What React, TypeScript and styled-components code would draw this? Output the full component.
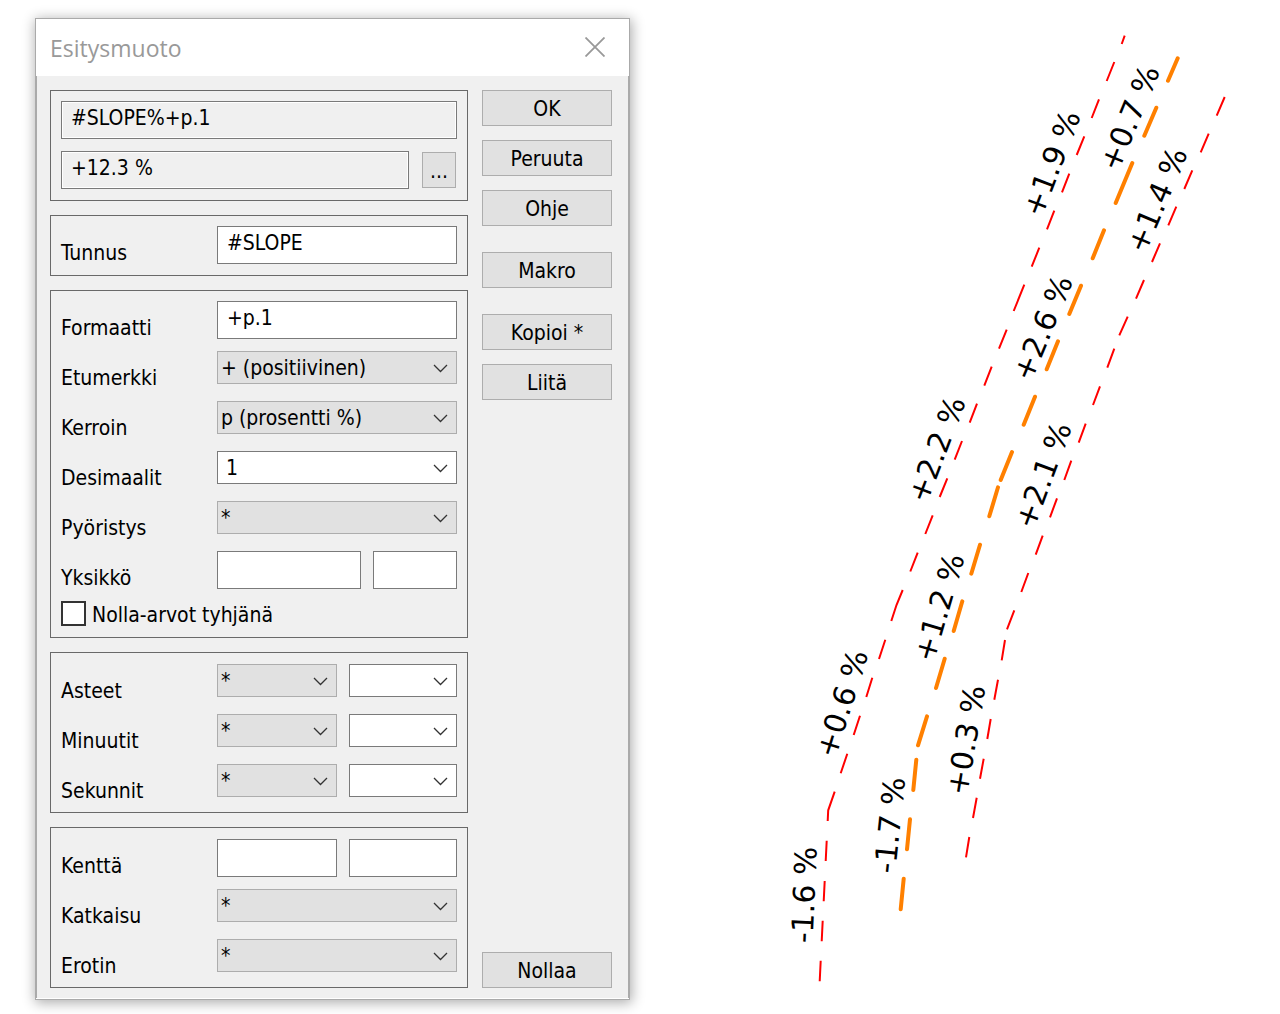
import React, { useId } from "react";
import styled, { createGlobalStyle } from "styled-components";

const GlobalStyle = createGlobalStyle`
  *, *::before, *::after { box-sizing: border-box; }
  body {
    margin: 0;
    background: #fff;
    color: #000;
    font-family: "DejaVu Sans Condensed", "DejaVu Sans", sans-serif;
    font-stretch: condensed;
    font-size: 21px;
  }
  button, input, select { font: inherit; color: inherit; margin: 0; border-radius: 0; }
`;

const Page = styled.main`
  display: flex;
  align-items: flex-start;
`;

const Dialog = styled.section`
  flex: 0 0 595px;
  margin: 18px 0 14px 35px;
  border: 1px solid #aaa;
  background: #fff;
  box-shadow: 1px 2px 12px 1px rgba(0, 0, 0, 0.32);
`;

const TitleBar = styled.header`
  display: flex;
  align-items: center;
  justify-content: space-between;
  height: 57px;
  padding: 0 24px 2px 14px;
`;

const Title = styled.h1`
  margin: 0;
  padding-top: 3px;
  font-family: "Open Sans", "Noto Sans", sans-serif;
  font-stretch: normal;
  font-size: 23px;
  line-height: 30px;
  font-weight: 400;
  color: #999;
`;

const CloseButton = styled.button`
  display: flex;
  padding: 0;
  border: 0;
  background: none;
`;

const Body = styled.form`
  display: grid;
  grid-template-columns: minmax(0, 1fr) 130px;
  column-gap: 14px;
  margin-bottom: 1px;
  padding: 14px 16px 10px 13px;
  border: solid #aaa;
  border-width: 0 1px;
  background: #f0f0f0;
`;

const Groups = styled.div`
  display: flex;
  flex-direction: column;
  gap: 14px;
`;

const Group = styled.div<{ $low?: boolean }>`
  display: grid;
  row-gap: 12px;
  padding: ${(p) => (p.$low ? "11px 10px 10px" : "10px 10px 11px")};
  border: 1px solid #696969;
`;

const Row = styled.div<{ $columns: string; $gap?: number }>`
  display: grid;
  grid-template-columns: ${(p) => p.$columns};
  column-gap: ${(p) => p.$gap ?? 0}px;
  align-items: start;
  height: 38px;
`;

const Label = styled.label`
  padding-top: 15px;
  line-height: 24px;
`;

const TextField = styled.input`
  width: 100%;
  min-width: 0;
  height: 38px;
  padding: 0 8px 4px 9px;
  border: 1px solid #7a7a7a;
  background: #fff;
  outline: none;

  &:read-only {
    background: #f0f0f0;
    box-shadow: inset 0 0 0 1px #fff;
  }
`;

const SelectFrame = styled.div`
  position: relative;
  display: grid;

  svg {
    position: absolute;
    right: 9px;
    top: 13px;
    pointer-events: none;
  }
`;

const SelectBox = styled.select<{ $editable?: boolean }>`
  appearance: none;
  width: 100%;
  height: 33px;
  padding: 0 28px 0 ${(p) => (p.$editable ? 8 : 3)}px;
  border: 1px solid ${(p) => (p.$editable ? "#7a7a7a" : "#adadad")};
  background: ${(p) => (p.$editable ? "#fff" : "#e1e1e1")};
  outline: none;
`;

const CheckRow = styled.div`
  display: flex;
  align-items: center;
  gap: 6px;
  height: 25px;
`;

const CheckBox = styled.input`
  appearance: none;
  width: 25px;
  height: 25px;
  border: 2px solid #333;
  background: #fff;
`;

const CheckLabel = styled.label`
  line-height: 24px;
  padding-top: 2px;
`;

const Buttons = styled.div`
  display: flex;
  flex-direction: column;
  gap: 14px;
`;

const ButtonSet = styled.div<{ $last?: boolean }>`
  display: grid;
  gap: 14px;
  margin-bottom: 12px;
  ${(p) => p.$last && "margin: auto 0 0;"}
`;

const Button = styled.button`
  width: 100%;
  height: 36px;
  padding: 2px 0 0;
  border: 1px solid #adadad;
  background: #e1e1e1;
`;

const MoreButton = styled(Button)`
  width: 34px;
  margin-top: 1px;
`;

const Drawing = styled.svg`
  display: block;
  flex: 1 1 0;
  min-width: 0;
  font-family: "DejaVu Sans", sans-serif;
  font-stretch: normal;
  font-size: 30px;
`;

const VALUE_COLUMNS = "156px minmax(0, 1fr)";

function Field({ label, value = "" }: { label: string; value?: string }) {
  const id = useId();
  return (
    <Row $columns={VALUE_COLUMNS}>
      <Label htmlFor={id}>{label}</Label>
      <TextField id={id} defaultValue={value} />
    </Row>
  );
}

function Select({ value = "", ...rest }: { value?: string; editable?: boolean; id?: string; "aria-label"?: string }) {
  const { editable, ...attrs } = rest;
  return (
    <SelectFrame>
      <SelectBox $editable={editable} defaultValue={value} {...attrs}>
        <option value={value}>{value}</option>
      </SelectBox>
      <svg width="15" height="9" viewBox="0 0 15 9" fill="none" stroke="#333" strokeWidth="1.3" aria-hidden="true">
        <path d="M1 1 L7.5 7.5 L14 1" />
      </svg>
    </SelectFrame>
  );
}

function SelectRow({ label, value, editable }: { label: string; value: string; editable?: boolean }) {
  const id = useId();
  return (
    <Row $columns={VALUE_COLUMNS}>
      <Label htmlFor={id}>{label}</Label>
      <Select id={id} value={value} editable={editable} />
    </Row>
  );
}

const PairGrid = styled.div<{ $columns: string }>`
  display: grid;
  grid-template-columns: ${(p) => p.$columns};
  column-gap: 12px;
`;

function FieldPair({ label, columns }: { label: string; columns: string }) {
  const id = useId();
  return (
    <Row $columns={VALUE_COLUMNS}>
      <Label htmlFor={id}>{label}</Label>
      <PairGrid $columns={columns}>
        <TextField id={id} />
        <TextField aria-label={label + " 2"} />
      </PairGrid>
    </Row>
  );
}

function SelectPair({ label }: { label: string }) {
  const id = useId();
  return (
    <Row $columns={VALUE_COLUMNS}>
      <Label htmlFor={id}>{label}</Label>
      <PairGrid $columns="10fr 9fr">
        <Select id={id} value="*" />
        <Select aria-label={label + " 2"} editable />
      </PairGrid>
    </Row>
  );
}

const EDGE_LINES = [
  "M1124.7 35.7L1121.7 44M1114.3 62L1106.7 81M1099 99.3L1091.7 118M1084.3 136.3L1076.7 155",
  "M1069.3 173.7L1062 192.3M1054.3 210.7L1047 229.3M1039.3 247.7L1031.7 266.7M1024.3 284.7L1013.7 311",
  "M1006.7 329.7L999 348.7M991.7 366.7L984.3 385.7M977 403.7L969.7 422.7M962 441L954.7 459.7",
  "M947.3 478.3L939.7 497M932.7 515.3L925.3 534M917.7 552.7L910.3 571.5M902.7 590L896.5 605L891.3 621",
  "M885.3 639.7L879 659M872.3 677.7L866.3 697M860 715.7L853.7 735M847.3 753.7L840.7 773.3",
  "M834.7 791.7L828.2 810.3L827.7 821M826.7 840.7L825.7 861M824.7 881L823.7 901.3M822.7 920.7L821.7 941.3M820.7 960.7L819.7 981.3",
  "M1224.7 97L1216.7 115.7M1208.7 133.7L1200.7 152.3M1192.3 170.3L1184.3 189M1176.3 206.7L1168.3 225.3",
  "M1160 243.3L1152 262M1144 280L1136 298.7M1127.7 316.7L1119.3 335.3M1114.3 348.7L1107.3 367.7",
  "M1100 386.3L1093 405M1085.7 423.7L1078.7 442.7M1071.3 460.7L1064.3 480M1057 498.3L1050 517.3",
  "M1042.7 535.7L1035.7 554.7M1028.3 573L1021.3 592M1014.3 610.3L1007 629.3M1005 640L1001.7 660.3",
  "M998 679.7L994.3 699.7M990.7 719L987.3 739M983.7 758.7L980 778.7M976.7 797.7L973 818M969.3 837L966 857.3",
].join("");

const CENTRE_LINE = [
  "M1177.7 58.3L1168 80.7M1156.3 107.7L1144.3 135.7M1132.3 163L1115.7 203M1104 230.3L1092.7 258.3",
  "M1081 285.7L1069.3 314M1058 341.3L1046.7 369.3M1035 396.7L1023.7 424.7M1012 452L1000.7 480",
  "M998 487.3L989.3 516.3M980 544.7L971.3 573.7M962.3 601.3L953.7 631M944.7 658.7L936 688",
  "M927 716.3L918 745.3M916.3 759.7L913.3 790M910 819.3L907 849.3M903.7 878.7L900.7 909.3",
].join("");

// Each slope label turns about the middle of its sign.
const SLOPES = [
  { text: "+1.9 %", x: 1036, y: 205, angle: 69 },
  { text: "+0.7 %", x: 1113, y: 159, angle: 67.5 },
  { text: "+1.4 %", x: 1140, y: 241, angle: 67 },
  { text: "+2.6 %", x: 1026, y: 369, angle: 67.5 },
  { text: "+2.2 %", x: 921, y: 491, angle: 69 },
  { text: "+2.1 %", x: 1028, y: 517, angle: 69.5 },
  { text: "+1.2 %", x: 927, y: 650, angle: 73.5 },
  { text: "+0.6 %", x: 829, y: 746, angle: 72.5 },
  { text: "+0.3 %", x: 959, y: 784, angle: 80.5 },
  { text: "-1.7 %", x: 884.3, y: 871, angle: 84 },
  { text: "-1.6 %", x: 801.7, y: 941, angle: 87.5 },
];

function RoadDrawing() {
  return (
    <Drawing viewBox="630 0 650 1014">
      <path d={EDGE_LINES} fill="none" stroke="#f00" strokeWidth="2" />
      <path d={CENTRE_LINE} fill="none" stroke="#ff8000" strokeWidth="4" strokeLinecap="round" />
      {SLOPES.map((s) => (
        <text
          key={s.text}
          x={s.text[0] === "+" ? -11 : -2}
          y={s.text[0] === "+" ? 10 : 11}
          transform={`translate(${s.x} ${s.y}) rotate(${-s.angle})`}
        >
          {s.text}
        </text>
      ))}
    </Drawing>
  );
}

export default function App() {
  return (
    <>
      <GlobalStyle />
      <Page>
        <Dialog role="dialog" aria-labelledby="dialog-title">
          <TitleBar>
            <Title id="dialog-title">Esitysmuoto</Title>
            <CloseButton type="button" aria-label="Sulje">
              <svg width="20" height="20" viewBox="0 0 20 20" stroke="#999" strokeWidth="1.8">
                <path d="M0.5 0.5L19.5 19.5M19.5 0.5L0.5 19.5" />
              </svg>
            </CloseButton>
          </TitleBar>
          <Body onSubmit={(e) => e.preventDefault()}>
            <Groups>
              <Group>
                <Row $columns="minmax(0, 1fr)">
                  <TextField readOnly aria-label="Muoto" defaultValue="#SLOPE%+p.1" />
                </Row>
                <Row $columns="minmax(0, 1fr) 35px" $gap={13}>
                  <TextField readOnly aria-label="Esimerkki" defaultValue="+12.3 %" />
                  <MoreButton type="button">...</MoreButton>
                </Row>
              </Group>
              <Group>
                <Field label="Tunnus" value="#SLOPE" />
              </Group>
              <Group>
                <Field label="Formaatti" value="+p.1" />
                <SelectRow label="Etumerkki" value="+ (positiivinen)" />
                <SelectRow label="Kerroin" value="p (prosentti %)" />
                <SelectRow label="Desimaalit" value="1" editable />
                <SelectRow label="Pyöristys" value="*" />
                <FieldPair label="Yksikkö" columns="12fr 7fr" />
                <CheckRow>
                  <CheckBox type="checkbox" id="empty-zero" />
                  <CheckLabel htmlFor="empty-zero">Nolla-arvot tyhjänä</CheckLabel>
                </CheckRow>
              </Group>
              <Group $low>
                <SelectPair label="Asteet" />
                <SelectPair label="Minuutit" />
                <SelectPair label="Sekunnit" />
              </Group>
              <Group $low>
                <FieldPair label="Kenttä" columns="10fr 9fr" />
                <SelectRow label="Katkaisu" value="*" />
                <SelectRow label="Erotin" value="*" />
              </Group>
            </Groups>
            <Buttons>
              <ButtonSet>
                <Button type="submit">OK</Button>
                <Button type="button">Peruuta</Button>
                <Button type="button">Ohje</Button>
              </ButtonSet>
              <ButtonSet>
                <Button type="button">Makro</Button>
              </ButtonSet>
              <ButtonSet>
                <Button type="button">Kopioi *</Button>
                <Button type="button">Liitä</Button>
              </ButtonSet>
              <ButtonSet $last>
                <Button type="button">Nollaa</Button>
              </ButtonSet>
            </Buttons>
          </Body>
        </Dialog>
        <RoadDrawing />
      </Page>
    </>
  );
}
